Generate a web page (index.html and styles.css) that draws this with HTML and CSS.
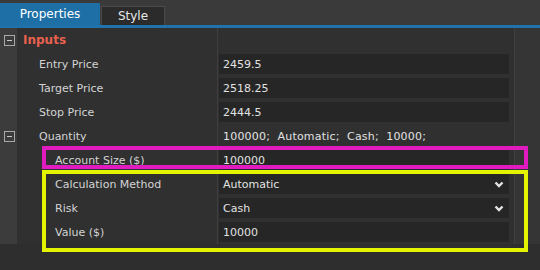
FILE: index.html
```html
<!DOCTYPE html>
<html lang="en">
<head>
    <meta charset="UTF-8">
    <meta name="viewport" content="width=device-width, initial-scale=1.0">
    <title>Properties</title>
    <link rel="stylesheet" href="styles.css">
</head>
<body>
    <div class="tabs">
        <div class="tab active">Properties</div>
        <div class="tab">Style</div>
    </div>

    <div class="grid">
        <div class="row">
            <div class="gutter"><span class="toggle"></span></div>
            <div class="label group">Inputs</div>
            <div class="value"></div>
            <div class="rest"></div>
        </div>
        <div class="row">
            <div class="gutter"></div>
            <div class="label">Entry Price</div>
            <div class="value"><div class="box">2459.5</div></div>
            <div class="rest"></div>
        </div>
        <div class="row">
            <div class="gutter"></div>
            <div class="label">Target Price</div>
            <div class="value"><div class="box">2518.25</div></div>
            <div class="rest"></div>
        </div>
        <div class="row">
            <div class="gutter"></div>
            <div class="label">Stop Price</div>
            <div class="value"><div class="box">2444.5</div></div>
            <div class="rest"></div>
        </div>
        <div class="row">
            <div class="gutter"><span class="toggle"></span></div>
            <div class="label">Quantity</div>
            <div class="value"><div class="plain">100000;  Automatic;  Cash;  10000;</div></div>
            <div class="rest"></div>
        </div>
        <div class="row mark-pink">
            <div class="gutter"></div>
            <div class="label child">Account Size ($)</div>
            <div class="value"><div class="box">100000</div></div>
            <div class="rest"></div>
        </div>
        <div class="mark-yellow">
            <div class="row">
                <div class="gutter"></div>
                <div class="label child">Calculation Method</div>
                <div class="value">
                    <div class="box select">Automatic
                        <svg width="10" height="7" viewBox="0 0 10 7"><polyline points="1.5,1.5 5,5 8.5,1.5" fill="none" stroke="#e4e4e4" stroke-width="2.4"/></svg>
                    </div>
                </div>
                <div class="rest"></div>
            </div>
            <div class="row">
                <div class="gutter"></div>
                <div class="label child">Risk</div>
                <div class="value">
                    <div class="box select">Cash
                        <svg width="10" height="7" viewBox="0 0 10 7"><polyline points="1.5,1.5 5,5 8.5,1.5" fill="none" stroke="#e4e4e4" stroke-width="2.4"/></svg>
                    </div>
                </div>
                <div class="rest"></div>
            </div>
            <div class="row">
                <div class="gutter"></div>
                <div class="label child">Value ($)</div>
                <div class="value"><div class="box">10000</div></div>
                <div class="rest"></div>
            </div>
        </div>
    </div>
</body>
</html>
```

FILE: styles.css
```css
body {
    margin: 0;
    padding: 0;
    width: 540px;
    height: 270px;
    overflow: hidden;
    background-color: #2e2e2e;
    color: #d4d4d4;
    font-family: "DejaVu Sans", Verdana, sans-serif;
    font-size: 11px;
}
.tabs {
    display: flex;
    align-items: flex-end;
    height: 25px;
    background-color: #3a3a3a;
    border-bottom: 3px solid #1f72ab;
}
.tab {
    box-sizing: border-box;
    height: 19px;
    width: 64px;
    margin-left: 1px;
    display: flex;
    align-items: center;
    justify-content: center;
    background-color: #2b2b2b;
    border: 1px solid #4a4a4a;
    border-bottom: none;
    color: #e8e8e8;
    font-size: 12px;
}
.tab.active {
    height: 22px;
    width: 100px;
    margin-left: 0;
    background-color: #1f6fa7;
    border: none;
    color: #ffffff;
}
.row {
    display: grid;
    grid-template-columns: 17px 200px 297px 1fr;
    height: 24px;
    position: relative;
}
.gutter {
    background-color: #3c3c3c;
    display: flex;
    align-items: center;
    padding-left: 4px;
}
.toggle {
    box-sizing: border-box;
    width: 11px;
    height: 11px;
    border: 1px solid #a8a8a8;
    position: relative;
}
.toggle::after {
    content: "";
    position: absolute;
    left: 2px;
    right: 2px;
    top: 4px;
    height: 1px;
    background-color: #c8c8c8;
}
.label {
    background-color: #303030;
    display: flex;
    align-items: center;
    padding-left: 22px;
    white-space: nowrap;
}
.label.group {
    padding-left: 6px;
    color: #e8614e;
    font-weight: bold;
    font-size: 12px;
}
.label.child {
    padding-left: 38px;
}
.value {
    background-color: #303030;
    border-left: 1px solid #3e3e3e;
    padding: 2px 5px 2px 1px;
    min-width: 0;
}
.box {
    height: 20px;
    background-color: #262626;
    display: flex;
    align-items: center;
    justify-content: space-between;
    padding: 0 5px 0 4px;
    color: #e2e2e2;
}
.plain {
    height: 20px;
    display: flex;
    align-items: center;
    padding-left: 4px;
    white-space: pre;
    letter-spacing: 0.2px;
    color: #e2e2e2;
}
.rest {
    background-color: #353535;
    border-left: 1px solid #404040;
}
.mark-pink::after {
    content: "";
    position: absolute;
    top: -2px;
    left: 42px;
    right: 12px;
    bottom: 3px;
    border: 4px solid #e01cc0;
    pointer-events: none;
}
.mark-yellow {
    position: relative;
}
.mark-yellow::after {
    content: "";
    position: absolute;
    top: -2px;
    left: 42px;
    right: 12px;
    bottom: -8px;
    border: 4px solid #e4f400;
    pointer-events: none;
}
```
